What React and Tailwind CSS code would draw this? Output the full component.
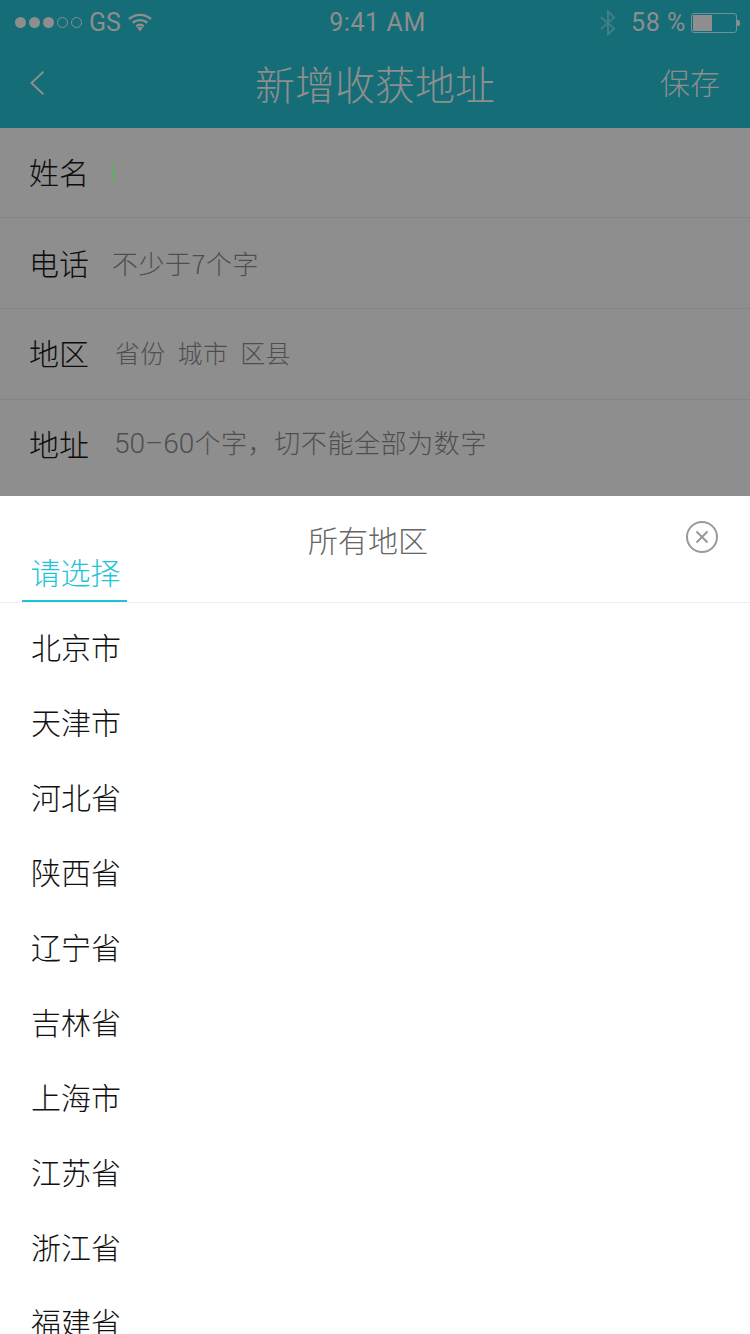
import React from 'react';

const regions = ['北京市', '天津市', '河北省', '陕西省', '辽宁省', '吉林省', '上海市', '江苏省', '浙江省', '福建省'];

const SignalDots = () => (
  <div className="flex items-center gap-[3px]">
    {[0, 1, 2].map((i) => (
      <span key={i} className="w-[11px] h-[11px] rounded-full bg-[#8e8e8e]" />
    ))}
    {[0, 1].map((i) => (
      <span key={i} className="w-[11px] h-[11px] rounded-full border border-[#8e8e8e]" />
    ))}
  </div>
);

const Wifi = () => (
  <svg width="24" height="19" viewBox="0 0 24 19" fill="none" stroke="#8e8e8e" strokeWidth="2.4">
    <path d="M1 6C7.5 0.5 16.5 0.5 23 6" />
    <path d="M4.6 9.8C9 6.2 15 6.2 19.4 9.8" />
    <path d="M8.2 13.2C10.4 11.6 13.6 11.6 15.8 13.2" />
    <path d="M9 14.6L12 18.5L15 14.6C13 13.6 11 13.6 9 14.6Z" fill="#8e8e8e" stroke="none" />
  </svg>
);

const Bluetooth = () => (
  <svg width="16" height="26" viewBox="0 0 16 26" fill="none" stroke="#3f7f87" strokeWidth="2">
    <path d="M1 7L14 18.5L8 24.5V1.5L14 7.5L1 19" />
  </svg>
);

const Battery = () => (
  <div className="flex items-center">
    <div className="w-[46px] h-[20px] rounded-[3px] border border-[#6f9298] p-[1px]">
      <div className="w-[19px] h-full bg-[#8e8e8e]" />
    </div>
    <div className="w-[3px] h-[6px] bg-[#8e8e8e] rounded-r-[2px]" />
  </div>
);

const FormRow = ({ label, height, labelPad = 'pb-[4px]', last, children }) => (
  <div className={`flex items-center pl-[29px] ${height} ${last ? '' : 'border-b border-[#858585]'}`}>
    <span className={`w-[83px] ${labelPad} text-[30px] leading-none font-light text-[#0c0c0c] shrink-0`}>{label}</span>
    {children}
  </div>
);

const App = () => {
  return (
    <div className="w-[750px] h-[1334px] flex flex-col overflow-hidden bg-white font-['Noto_Sans_CJK_SC','Noto_Sans',sans-serif]">
      {/* header, dimmed by the sheet */}
      <div className="h-[128px] bg-[#156d77] shrink-0">
        <div className="h-[44px] pt-[1px] flex items-center justify-between pl-[15px] pr-[10px] font-['Roboto',sans-serif] text-[25px] text-[#8e8e8e]">
          <div className="flex items-center gap-[7px] w-[200px]">
            <SignalDots />
            <span>GS</span>
            <Wifi />
          </div>
          <span className="tracking-[0.6px]">9:41 AM</span>
          <div className="flex items-center justify-end w-[200px]">
            <Bluetooth />
            <span className="ml-[15px] mr-[5px] tracking-[0.6px]">58 %</span>
            <Battery />
          </div>
        </div>
        <div className="h-[84px] grid grid-cols-[1fr_auto_1fr] items-center pl-[30px] pr-[30px]">
          <svg className="mb-[6px]" width="14" height="24" viewBox="0 0 14 24" fill="none" stroke="#8e8e8e" strokeWidth="2">
            <path d="M13.5 0.7L1.5 12L13.5 23.3" />
          </svg>
          <span className="pb-[6px] text-[40px] leading-none text-[#8e8e8e] font-light">新增收获地址</span>
          <span className="pb-[10px] justify-self-end text-[30px] leading-none text-[#8e8e8e] font-light">保存</span>
        </div>
      </div>

      {/* form */}
      <div className="h-[368px] shrink-0 bg-[#8e8e8e]">
        <FormRow label="姓名" height="h-[90px]">
          <span className="w-[2px] h-[20px] bg-[#68a868]" />
        </FormRow>
        <FormRow label="电话" height="h-[91px]" labelPad="pb-[3px]">
          <span className="pb-[1px] text-[26px] leading-none font-light tracking-[0.5px] text-[#4e4e4e]">不少于7个字</span>
        </FormRow>
        <FormRow label="地区" height="h-[91px]">
          <div className="flex gap-[12px] ml-[3px] pb-[4px] text-[25px] leading-none font-light tracking-[0.3px] text-[#4e4e4e]">
            <span>省份</span>
            <span>城市</span>
            <span>区县</span>
          </div>
        </FormRow>
        <FormRow label="地址" height="h-[90px]" last>
          <span className="ml-[2px] pb-[4px] text-[26px] leading-none font-light tracking-[0.6px] text-[#4e4e4e]">
            <span className="font-['Roboto',sans-serif] text-[28px] tracking-normal">50–60</span>个字，切不能全部为数字
          </span>
        </FormRow>
      </div>

      {/* region sheet */}
      <div className="flex-1 bg-white">
        <div className="relative h-[107px] border-b border-[#eeeeee]">
          <div className="pt-[26px] pl-[308px] text-[30px] leading-[34px] font-light text-[#666666]">所有地区</div>
          <svg className="absolute left-[686px] top-[25px]" width="32" height="32" viewBox="0 0 32 32" fill="none" stroke="#999999" strokeWidth="2">
            <circle cx="16" cy="16" r="15" />
            <path d="M10.5 10.5L21.5 21.5M21.5 10.5L10.5 21.5" />
          </svg>
          <div className="absolute left-[22px] bottom-0 w-[105px] h-[48px] pl-[2px] border-b-2 border-[#1fc4d8] text-center text-[30px] leading-[34px] font-light text-[#1fc4d8]">
            请选择
          </div>
        </div>
        <div className="pl-[31px] pt-[5px]">
          {regions.map((name) => (
            <div key={name} className="h-[75px] flex items-center text-[30px] leading-none font-light text-[#111111]">
              {name}
            </div>
          ))}
        </div>
      </div>
    </div>
  );
};

export default App;
